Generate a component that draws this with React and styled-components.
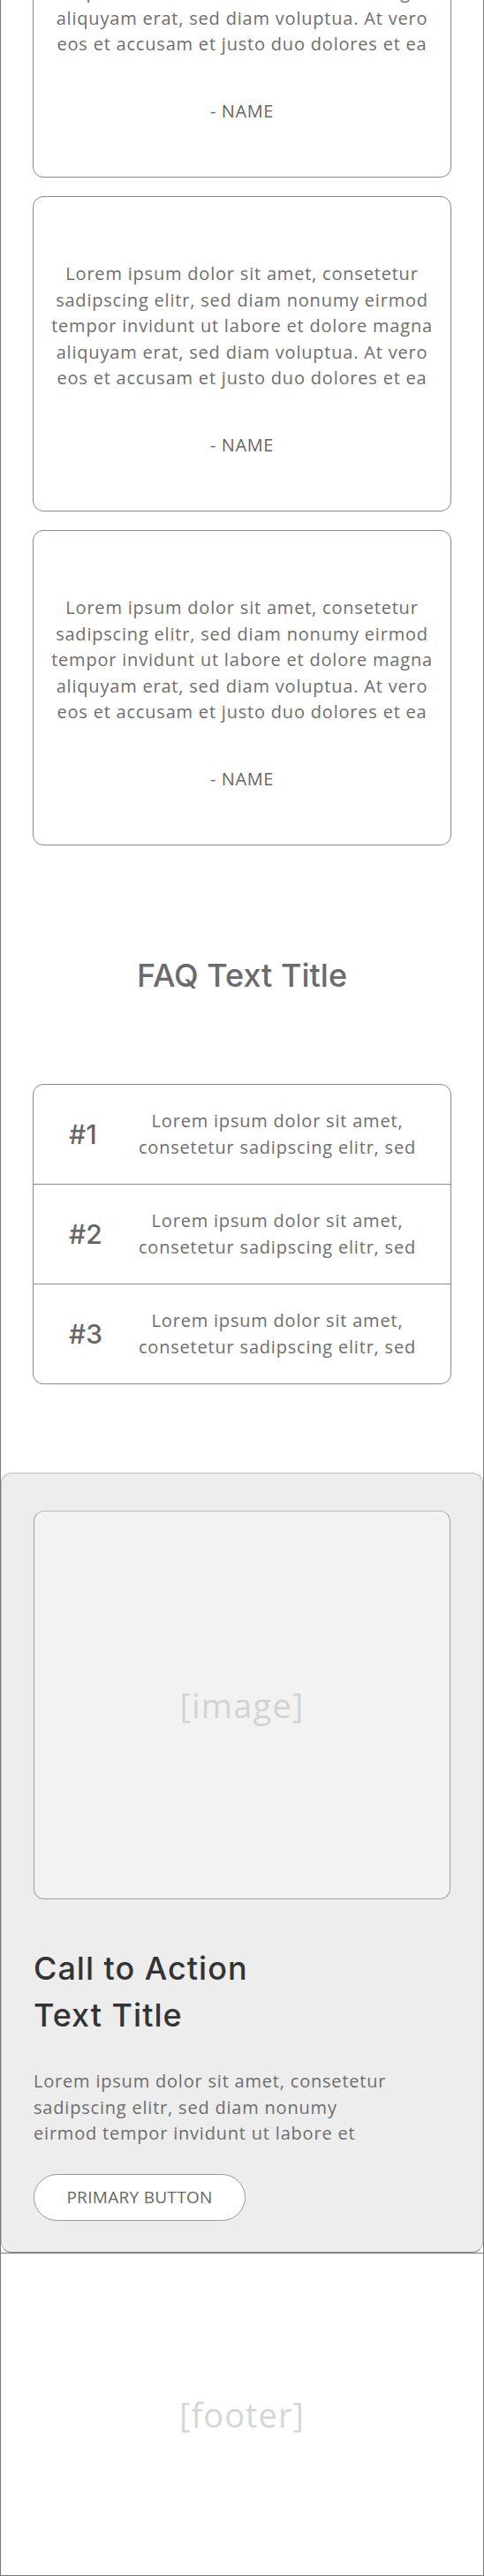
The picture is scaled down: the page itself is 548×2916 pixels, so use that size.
import styled, { createGlobalStyle } from "styled-components";

const GlobalStyle = createGlobalStyle`
  * {
    box-sizing: border-box;
  }

  body {
    margin: 0;
    background: #fff;
    font-family: "Open Sans", "Liberation Sans", sans-serif;
  }
`;

const HEADING_FONT = `Inter, "Open Sans", "Liberation Sans", sans-serif`;

const QUOTE = [
  "Lorem ipsum dolor sit amet, consetetur",
  "sadipscing elitr, sed diam nonumy eirmod",
  "tempor invidunt ut labore et dolore magna",
  "aliquyam erat, sed diam voluptua. At vero",
  "eos et accusam et justo duo dolores et ea",
];

const FAQ_LINES = ["Lorem ipsum dolor sit amet,", "consetetur sadipscing elitr, sed"];

const CTA_LINES = [
  "Lorem ipsum dolor sit amet, consetetur",
  "sadipscing elitr, sed diam nonumy",
  "eirmod tempor invidunt ut labore et",
];

const testimonials = [1, 2, 3];
const faqs = ["#1", "#2", "#3"];

const Lines = ({ lines }) =>
  lines.map((line) => <Line key={line}>{line}</Line>);

const App = () => {
  return (
    <>
      <GlobalStyle />
      <Page>
        <Testimonials>
          {testimonials.map((id) => (
            <Card key={id}>
              <Quote>
                <Lines lines={QUOTE} />
              </Quote>
              <Author>- NAME</Author>
            </Card>
          ))}
        </Testimonials>

        <FaqTitle>FAQ Text Title</FaqTitle>
        <FaqList>
          {faqs.map((num) => (
            <FaqRow key={num}>
              <FaqNum>{num}</FaqNum>
              <FaqText>
                <Lines lines={FAQ_LINES} />
              </FaqText>
            </FaqRow>
          ))}
        </FaqList>

        <Cta>
          <ImageBox>[image]</ImageBox>
          <CtaTitle>
            <Line>Call to Action</Line>
            <Line>Text Title</Line>
          </CtaTitle>
          <CtaText>
            <Lines lines={CTA_LINES} />
          </CtaText>
          <PrimaryButton>PRIMARY BUTTON</PrimaryButton>
        </Cta>

        <Footer>[footer]</Footer>
      </Page>
    </>
  );
};

const Page = styled.div`
  width: 548px;
  border: 1px solid #777;
  border-top: none;
`;

const Line = styled.span`
  display: block;
  white-space: nowrap;
`;

const Testimonials = styled.div`
  display: flex;
  flex-direction: column;
  gap: 21px;
  margin-top: -156px;
  padding: 0 36px;
`;

const Card = styled.div`
  height: 357px;
  padding: 72px 10px 0;
  border: 1px solid #8a8a8a;
  border-radius: 12px;
  text-align: center;
`;

const Quote = styled.p`
  margin: 0;
  font-size: 20px;
  line-height: 29.5px;
  letter-spacing: 0.8px;
  color: #6e6e6e;
`;

const Author = styled.div`
  margin-top: 46px;
  font-size: 20px;
  line-height: 29.5px;
  letter-spacing: 0.6px;
  color: #666;
`;

const FaqTitle = styled.h2`
  margin: 120px 0 0;
  font-family: ${HEADING_FONT};
  font-size: 36px;
  font-weight: 500;
  line-height: 54px;
  letter-spacing: 0;
  text-align: center;
  color: #6b6b6b;
`;

const FaqList = styled.div`
  margin: 96px 36px 0;
  border: 1px solid #8a8a8a;
  border-radius: 12px;
  overflow: hidden;
`;

const FaqRow = styled.div`
  display: grid;
  grid-template-columns: 70px 1fr;
  align-items: center;
  box-sizing: content-box;
  height: 112px;
  padding: 0 30px 0 40px;

  & + & {
    border-top: 1px solid #8a8a8a;
  }
`;

const FaqNum = styled.span`
  font-family: ${HEADING_FONT};
  font-size: 30px;
  font-weight: 500;
  color: #666;
`;

const FaqText = styled.p`
  margin: 0;
  font-size: 20px;
  line-height: 30px;
  letter-spacing: 0.8px;
  text-align: center;
  color: #6e6e6e;
`;

const Cta = styled.section`
  margin-top: 100px;
  padding: 42px 36px 35px;
  background: #ededed;
  border: 1px solid #bcbcbc;
  border-bottom-color: #808080;
  border-radius: 12px;
`;

const ImageBox = styled.div`
  display: flex;
  align-items: center;
  justify-content: center;
  height: 440px;
  background: #f2f2f2;
  border: 1px solid #a0a0a0;
  border-top-color: #bbb;
  border-radius: 12px;
  font-size: 38px;
  letter-spacing: 1.2px;
  color: #d3d3d3;
`;

const CtaTitle = styled.h2`
  margin: 52px 0 0;
  font-family: ${HEADING_FONT};
  font-size: 36px;
  font-weight: 500;
  line-height: 53px;
  letter-spacing: 1px;
  color: #333;
`;

const CtaText = styled.p`
  margin: 33px 0 0;
  font-size: 20px;
  line-height: 29.5px;
  letter-spacing: 0.8px;
  color: #6e6e6e;
`;

const PrimaryButton = styled.button`
  display: flex;
  align-items: center;
  justify-content: center;
  width: 240px;
  height: 53px;
  margin-top: 31px;
  padding: 0;
  background: #fff;
  border: 1px solid #999;
  border-radius: 27px;
  font-family: "Open Sans", "Liberation Sans", sans-serif;
  font-size: 19px;
  letter-spacing: 0.3px;
  color: #666;
`;

const Footer = styled.footer`
  display: flex;
  align-items: center;
  justify-content: center;
  height: 365px;
  border-top: 1px solid #808080;
  font-size: 38px;
  letter-spacing: 1px;
  color: #d6d6d6;
`;

export default App;
